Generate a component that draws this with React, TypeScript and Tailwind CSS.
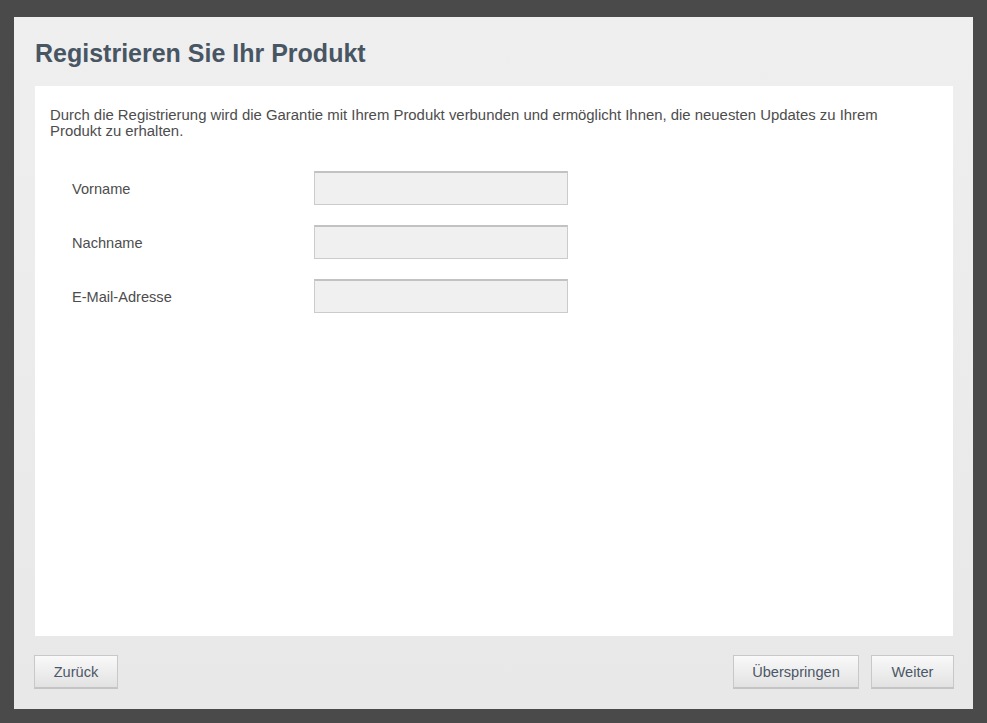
const fields = ["Vorname", "Nachname", "E-Mail-Adresse"];

const Button = ({ label, width }: { label: string; width: string }) => (
  <button
    className={`${width} h-[34px] pt-[3px] border border-[#c8c8c8] border-b-2 border-b-[#c4c4c4] bg-linear-to-b from-[#f9f9f9] to-[#e2e2e2] text-[14.6px] text-[#4b5766] cursor-pointer`}
  >
    {label}
  </button>
);

export default function App() {
  return (
    <div
      className="h-[723px] w-[987px] bg-[#4a4a4a] pt-[17px] px-[14px] pb-[14px]"
      style={{ fontFamily: '"Liberation Sans", Arial, sans-serif' }}
    >
      <div className="h-full flex flex-col bg-linear-to-b from-[#efefef] to-[#e8e8e8] pl-[21px] pr-[20px]">
        <h1 className="pt-[22px] text-[25px] leading-[28px] font-bold text-[#485563]">
          Registrieren Sie Ihr Produkt
        </h1>
        <div className="mt-[19px] flex-1 bg-white pt-[21px] px-[15px]">
          <p className="text-[14.9px] leading-[16px] text-[#4d4d4d] pr-[50px]">
            Durch die Registrierung wird die Garantie mit Ihrem Produkt verbunden und ermöglicht Ihnen, die neuesten Updates zu Ihrem Produkt zu erhalten.
          </p>
          <div className="mt-[32px] flex flex-col gap-[20px] pl-[22px]">
            {fields.map((f) => (
              <div key={f} className="flex items-center">
                <label className="w-[242px] text-[14.6px] text-[#4d4d4d] pt-[4px]">{f}</label>
                <input
                  type="text"
                  className="w-[254px] h-[34px] bg-[#f0f0f0] border border-[#cbcbcb] border-t-[#c2c2c2] border-t-2 outline-none"
                />
              </div>
            ))}
          </div>
        </div>
        <div className="flex items-center justify-between pt-[19px] pb-[20px] -ml-px -mr-px">
          <Button label="Zurück" width="w-[84px]" />
          <div className="flex gap-[12px]">
            <Button label="Überspringen" width="w-[126px]" />
            <Button label="Weiter" width="w-[83px]" />
          </div>
        </div>
      </div>
    </div>
  );
}
